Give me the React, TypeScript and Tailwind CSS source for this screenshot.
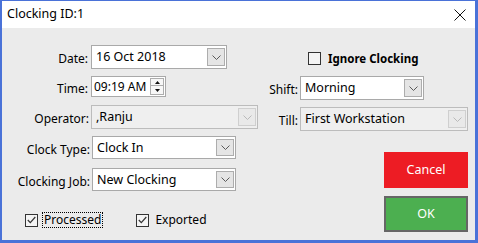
import React from "react";

const font = { fontFamily: '"Noto Sans", "Liberation Sans", sans-serif' };

function Chevron({ disabled = false }: { disabled?: boolean }) {
  return (
    <svg width="9" height="5" viewBox="0 0 9 5" className="block">
      <path d="M0.5 0.5 L4.5 4.5 L8.5 0.5" fill="none" stroke={disabled ? "#b9b9b9" : "#5a5a5a"} strokeWidth="1" />
    </svg>
  );
}

function Combo({
  value,
  width,
  height = "h-[24px]",
  disabled = false,
}: {
  value: string;
  width: string;
  height?: string;
  disabled?: boolean;
}) {
  return (
    <div
      className={`${width} ${height} flex items-center border ${
        disabled ? "bg-[#efefef] border-[#bcbcbc]" : "bg-white border-[#a9a9a9]"
      }`}
    >
      <span className="flex-1 pl-[4px] text-[12.5px] text-black leading-[18px] whitespace-nowrap overflow-hidden">
        {value}
      </span>
      <div
        className={`w-[18px] h-[calc(100%-4px)] mr-[1px] flex items-center justify-center border ${
          disabled ? "bg-[#e9e9e9] border-[#cfcfcf]" : "bg-[#e5e5e5] border-[#adadad]"
        }`}
      >
        <Chevron disabled={disabled} />
      </div>
    </div>
  );
}

function Label({ children }: { children: React.ReactNode }) {
  return <span className="text-[12px] text-black leading-[16px] whitespace-nowrap">{children}</span>;
}

function Check({ checked }: { checked: boolean }) {
  return (
    <span className="w-[13px] h-[13px] shrink-0 border border-[#333333] bg-[#f4f4f4] flex items-center justify-center">
      {checked && (
        <svg width="9" height="8" viewBox="0 0 9 8">
          <path d="M0.8 4 L3.3 6.6 L8.3 1" fill="none" stroke="#333333" strokeWidth="1.2" />
        </svg>
      )}
    </span>
  );
}

export default function App() {
  return (
    <div
      style={font}
      className="w-[478px] h-[243px] flex flex-col border-l-2 border-r-[3px] border-t border-b-[3px] border-[#4a72d8] bg-[#ebebeb]"
    >
      {/* title bar */}
      <div className="h-[27px] bg-white flex items-center justify-between pl-[5px] pr-[8px]">
        <span className="text-[12.5px] text-black">Clocking ID:1</span>
        <svg width="12" height="12" viewBox="0 0 12 12" className="mr-[1px]">
          <path d="M0.5 0.5 L11.5 11.5 M11.5 0.5 L0.5 11.5" stroke="#111" strokeWidth="1" />
        </svg>
      </div>

      {/* body */}
      <div className="flex-1 flex">
        {/* left column */}
        <div className="w-[256px] flex flex-col pt-[17px]">
          <div className="flex items-center h-[24px]">
            <div className="w-[87px] text-right pr-[1px]"><Label>Date:</Label></div>
            <div className="ml-[2px]"><Combo value="16 Oct 2018" width="w-[136px]" /></div>
          </div>
          <div className="flex items-center h-[21px] mt-[7px]">
            <div className="w-[87px] text-right pr-[1px]"><Label>Time:</Label></div>
            <div className="ml-[2px] w-[75px] h-[21px] bg-white border border-[#a9a9a9] flex items-center">
              <span className="flex-1 pl-[2px] text-[12px] leading-[16px] whitespace-nowrap">09:19 AM</span>
              <div className="flex flex-col mr-[1px]">
                <div className="w-[14px] h-[8px] border border-[#adadad] bg-[#f7f7f7] flex items-center justify-center">
                  <svg width="5" height="3" viewBox="0 0 5 3"><path d="M0 3 L2.5 0 L5 3 Z" fill="#111" /></svg>
                </div>
                <div className="w-[14px] h-[9px] border border-t-0 border-[#adadad] bg-[#f7f7f7] flex items-center justify-center">
                  <svg width="5" height="3" viewBox="0 0 5 3"><path d="M0 0 L2.5 3 L5 0 Z" fill="#111" /></svg>
                </div>
              </div>
            </div>
          </div>
          <div className="flex items-center h-[24px] mt-[8px]">
            <div className="w-[87px] text-right"><Label>Operator:</Label></div>
            <div className="ml-[2px]"><Combo value=",Ranju" width="w-[167px]" disabled /></div>
          </div>
          <div className="flex items-center h-[23px] mt-[7px]">
            <div className="w-[88px] text-right"><Label>Clock Type:</Label></div>
            <div className="ml-[2px]"><Combo value="Clock In" width="w-[144px]" height="h-[23px]" /></div>
          </div>
          <div className="flex items-center h-[23px] mt-[9px]">
            <div className="w-[88px] text-right"><Label>Clocking Job:</Label></div>
            <div className="ml-[2px]"><Combo value="New Clocking" width="w-[144px]" height="h-[23px]" /></div>
          </div>
          <div className="flex items-center h-[16px] mt-[21px] pl-[23px]">
            <Check checked />
            <span className="ml-[4px] h-[16px] px-[1px] flex items-center border border-dotted border-black">
              <Label>Processed</Label>
            </span>
            <span className="ml-[33px] flex"><Check checked /></span>
            <span className="ml-[6px] flex items-center"><Label>Exported</Label></span>
          </div>
        </div>

        {/* right column */}
        <div className="flex-1 flex flex-col pt-[24px] pr-[7px]">
          <div className="flex items-center h-[13px] pl-[50px]">
            <Check checked={false} />
            <span className="ml-[7px] text-[11.5px] font-bold leading-[16px] whitespace-nowrap">Ignore Clocking</span>
          </div>
          <div className="flex items-center h-[24px] mt-[11px]">
            <div className="w-[40px] text-right"><Label>Shift:</Label></div>
            <div className="ml-[2px]"><Combo value="Morning" width="w-[124px]" /></div>
          </div>
          <div className="flex items-center h-[24px] mt-[7px]">
            <div className="w-[40px] text-right"><Label>Till:</Label></div>
            <div className="ml-[2px]"><Combo value="First Workstation" width="w-[168px]" disabled /></div>
          </div>
          <div className="flex flex-col items-end mt-[21px]">
            <button className="w-[84px] h-[36px] bg-[#ed1c24] text-white text-[12.5px]">Cancel</button>
            <button className="w-[84px] h-[36px] mt-[8px] bg-[#4caf50] border-2 border-[#666666] text-white text-[12.5px]">
              OK
            </button>
          </div>
        </div>
      </div>
    </div>
  );
}
